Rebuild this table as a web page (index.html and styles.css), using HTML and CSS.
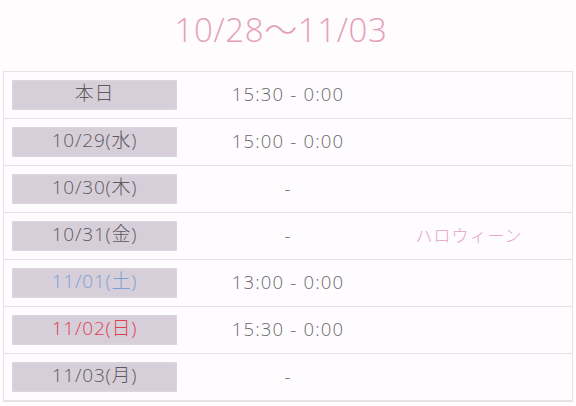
FILE: index.html
```html
<!DOCTYPE html>
<html lang="ja">
<head>
<meta charset="utf-8">
<link rel="stylesheet" href="styles.css">
</head>
<body>
<div class="page">
  <h1 class="title">10/28〜11/03</h1>
  <div class="table">
    <div class="row"><div class="day"><span class="box">本日</span></div><div class="time">15:30 - 0:00</div><div class="event"></div></div>
    <div class="row"><div class="day"><span class="box">10/29(水)</span></div><div class="time">15:00 - 0:00</div><div class="event"></div></div>
    <div class="row"><div class="day"><span class="box">10/30(木)</span></div><div class="time">-</div><div class="event"></div></div>
    <div class="row"><div class="day"><span class="box">10/31(金)</span></div><div class="time">-</div><div class="event">ハロウィーン</div></div>
    <div class="row"><div class="day"><span class="box sat">11/01(土)</span></div><div class="time">13:00 - 0:00</div><div class="event"></div></div>
    <div class="row"><div class="day"><span class="box sun">11/02(日)</span></div><div class="time">15:30 - 0:00</div><div class="event"></div></div>
    <div class="row"><div class="day"><span class="box">11/03(月)</span></div><div class="time">-</div><div class="event"></div></div>
  </div>
</div>
</body>
</html>
```
FILE: styles.css
```css
html, body {
  margin: 0;
  padding: 0;
  background: #fefcfd;
}
body {
  font-family: "Open Sans", "Noto Sans CJK JP", sans-serif;
  font-weight: 300;
  color: #666;
  overflow: hidden;
}
.page {
  padding: 0 3px;
}
.title {
  margin: 0;
  height: 71px;
  line-height: 60px;
  padding-right: 14px;
  text-align: center;
  font-size: 33px;
  font-weight: 300;
  letter-spacing: 0.6px;
  color: #e4a0ba;
}
.table {
  border: 1px solid #e6e1e4;
  background: #fefcfe;
}
.row {
  display: grid;
  grid-template-columns: 178px 212px 150px 1fr;
  height: 46px;
  border-bottom: 1px solid #e6e1e4;
  align-items: center;
}
.day {
  padding-left: 8px;
}
.box {
  display: block;
  width: 165px;
  height: 30px;
  box-sizing: border-box;
  padding-bottom: 3px;
  line-height: 27px;
  text-align: center;
  background: #d6cfd9;
  box-shadow: inset 0 0 3px rgba(255,255,255,0.35);
  font-size: 19px;
  letter-spacing: 0.8px;
  color: #5e5a60;
}
.box.sat { color: #7f9fd4; }
.box.sun { color: #e0404e; }
.time {
  text-align: center;
  font-size: 18.5px;
  letter-spacing: 1.2px;
  padding-bottom: 4px;
  color: #6a6a6a;
}
.event {
  text-align: center;
  font-size: 17px;
  letter-spacing: 1px;
  padding-bottom: 4px;
  color: #e4a6be;
}
```
